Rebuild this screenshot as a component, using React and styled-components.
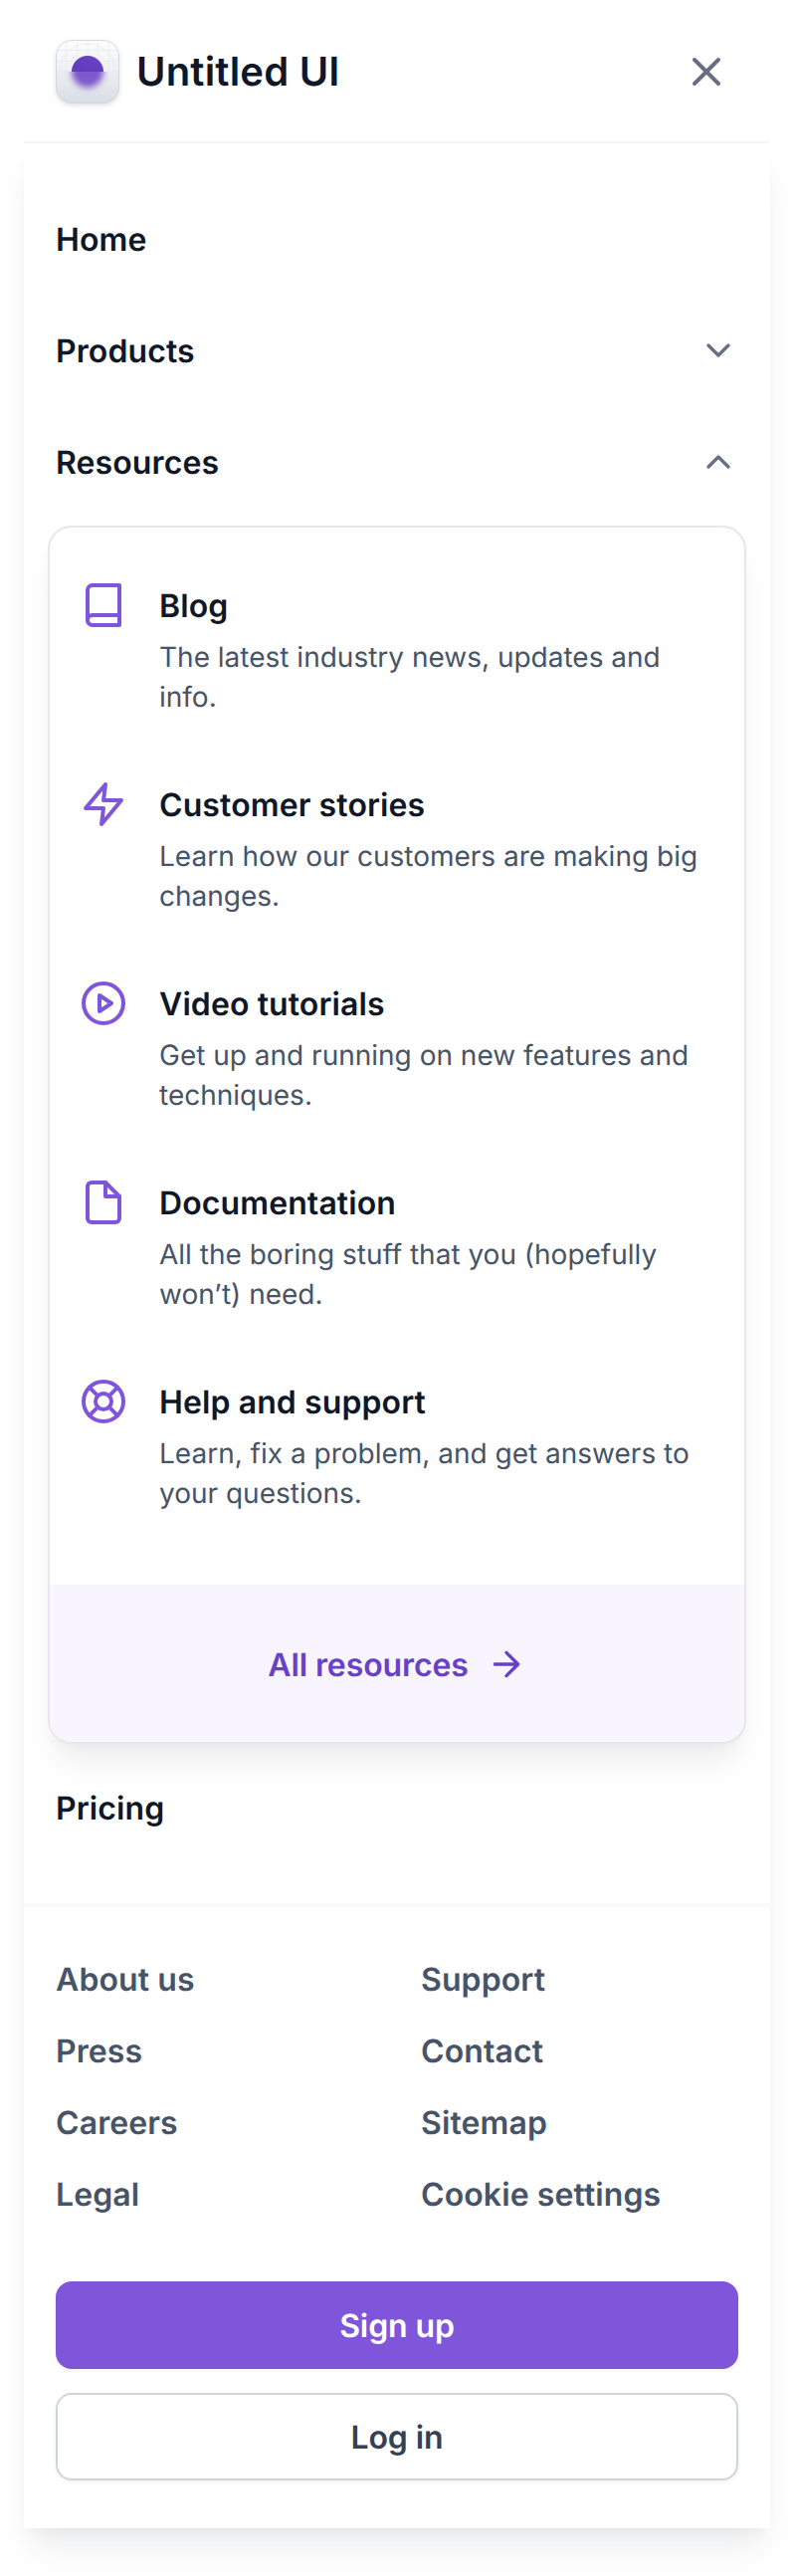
import React from "react";
import styled, { createGlobalStyle } from "styled-components";

const Global = createGlobalStyle`
  * { box-sizing: border-box; }
  body {
    margin: 0;
    background: #fff;
    font-family: Inter, "Liberation Sans", sans-serif;
    text-rendering: geometricPrecision;
  }
  a { color: inherit; text-decoration: none; }
  button { font-family: inherit; text-rendering: inherit; cursor: pointer; }
`;

const Page = styled.div`
  padding: 0 24px 48px;
`;

const Header = styled.header`
  display: flex;
  align-items: center;
  justify-content: space-between;
  height: 144px;
  padding: 2px 40px 0 32px;
  border-bottom: 2px solid #f2f4f7;
`;

const Brand = styled.a`
  display: flex;
  align-items: center;
  gap: 17px;
`;

const LogoTile = styled.svg`
  display: block;
  width: 64px;
  height: 64px;
  overflow: visible;
`;

const BrandName = styled.span`
  font-size: 40px;
  font-weight: 600;
  line-height: 64px;
  letter-spacing: 0.2px;
  color: #101828;
`;

const CloseButton = styled.button`
  display: flex;
  padding: 0;
  border: 0;
  background: none;
  color: #667085;
`;

const Menu = styled.div`
  background: #fff;
  box-shadow: 0 24px 32px -8px rgba(16, 24, 40, 0.09), 0 8px 12px -4px rgba(16, 24, 40, 0.03);
`;

const Nav = styled.nav`
  padding: 40px 0;
`;

const NavRow = styled.a`
  display: flex;
  align-items: center;
  justify-content: space-between;
  height: 112px;
  padding: 0 32px;
  color: #101828;
  svg { color: #667085; }
`;

const Label = styled.span`
  display: block;
  height: 48px;
  padding-top: 1px;
  font-size: 32px;
  font-weight: 600;
  line-height: 48px;
  letter-spacing: ${(p) => (p.$tight ? "-0.1px" : "0.1px")};
`;

const Submenu = styled.section`
  margin: 8px 24px;
  border: 2px solid #e4e7ec;
  border-radius: 24px;
  overflow: hidden;
  background: #fff;
  box-shadow: 0 24px 32px -8px rgba(16, 24, 40, 0.08), 0 8px 12px -4px rgba(16, 24, 40, 0.03);
`;

const ResourceList = styled.div`
  display: flex;
  flex-direction: column;
  gap: 64px;
  padding: 54px 30px 72px;
`;

const Resource = styled.a`
  display: flex;
  align-items: flex-start;
  gap: 32px;
  color: #101828;
  > svg { color: #7f56d9; }
`;

const ResourceText = styled.div`
  flex: 1;
  display: flex;
  flex-direction: column;
  gap: 8px;
`;

const ResourceBlurb = styled.span`
  font-size: 28px;
  line-height: 40px;
  color: #475467;
`;

const AllResources = styled.a`
  display: flex;
  align-items: center;
  justify-content: center;
  gap: 18px;
  height: 158px;
  padding-top: 2px;
  background: #f9f5ff;
  color: #6941c6;
`;

const Footer = styled.footer`
  display: flex;
  flex-direction: column;
  gap: 64px;
  padding: 48px 32px;
  border-top: 4px solid #f9fafb;
`;

const LinkGrid = styled.div`
  display: grid;
  grid-template-columns: 1fr 1fr;
  gap: 24px 48px;
`;

const FooterLink = styled.a`
  color: #475467;
`;

const Actions = styled.div`
  display: flex;
  flex-direction: column;
  gap: 24px;
`;

const Button = styled.button`
  display: flex;
  align-items: center;
  justify-content: center;
  height: 88px;
  padding: 0;
  border: 2px solid ${(p) => (p.$primary ? "#7f56d9" : "#d0d5dd")};
  border-radius: 16px;
  background: ${(p) => (p.$primary ? "#7f56d9" : "#fff")};
  color: ${(p) => (p.$primary ? "#fff" : "#344054")};
  box-shadow: 0 2px 4px rgba(16, 24, 40, 0.05);
`;

const IconSvg = styled.svg`
  display: block;
  flex: none;
  fill: none;
  stroke: currentColor;
  stroke-width: 2;
  stroke-linecap: round;
  stroke-linejoin: round;
`;

const shapes = {
  close: <path d="M18 6 6 18M6 6l12 12" />,
  down: <path d="m6 9 6 6 6-6" />,
  up: <path d="m18 15-6-6-6 6" />,
  arrow: <path d="M5 12h14M12 5l7 7-7 7" />,
  book: (
    <>
      <path d="M4 19.5A2.5 2.5 0 0 1 6.5 17H20" />
      <path d="M6.5 2H20v20H6.5A2.5 2.5 0 0 1 4 19.5v-15A2.5 2.5 0 0 1 6.5 2z" />
    </>
  ),
  zap: <path d="M13 2 3 14h9l-1 8 10-12h-9l1-8z" />,
  play: (
    <>
      <circle cx="12" cy="12" r="10" />
      <path d="m10 8 6 4-6 4V8z" />
    </>
  ),
  file: (
    <>
      <path d="M13 2H6a2 2 0 0 0-2 2v16a2 2 0 0 0 2 2h12a2 2 0 0 0 2-2V9z" />
      <path d="M13 2v7h7" />
    </>
  ),
  buoy: (
    <>
      <circle cx="12" cy="12" r="10" />
      <circle cx="12" cy="12" r="4" />
      <path d="m4.93 4.93 4.24 4.24M14.83 14.83l4.24 4.24M14.83 9.17l4.24-4.24M4.93 19.07l4.24-4.24" />
    </>
  ),
};

const Icon = ({ name, size = 48 }) => (
  <IconSvg viewBox="0 0 24 24" width={size} height={size} aria-hidden="true">
    {shapes[name]}
  </IconSvg>
);

const Logo = () => (
  <LogoTile viewBox="0 0 64 64" aria-hidden="true">
    <defs>
      <linearGradient id="tile" x1="0" y1="0" x2="0" y2="1">
        <stop offset="0" stopColor="#fff" />
        <stop offset="1" stopColor="#d9dde4" />
      </linearGradient>
      <linearGradient id="ball" x1="0.7" y1="0" x2="0.3" y2="1">
        <stop offset="0" stopColor="#6941c6" />
        <stop offset="1" stopColor="#5b38b0" />
      </linearGradient>
      <filter id="soft" x="-50%" y="-50%" width="200%" height="200%">
        <feGaussianBlur stdDeviation="3.2" />
      </filter>
      <filter id="drop" x="-20%" y="-20%" width="140%" height="150%">
        <feDropShadow dx="0" dy="2" stdDeviation="2" floodColor="#101828" floodOpacity="0.12" />
      </filter>
      <clipPath id="upper"><rect width="64" height="32" /></clipPath>
      <clipPath id="lower"><rect y="32" width="64" height="32" /></clipPath>
      <clipPath id="tileShape"><rect width="64" height="64" rx="16" /></clipPath>
    </defs>
    <rect width="64" height="64" rx="16" fill="url(#tile)" filter="url(#drop)" />
    <g clipPath="url(#tileShape)" fill="none" stroke="#e6e8ef" strokeWidth="0.7">
      <g clipPath="url(#upper)">
        <path d="M10.5 0v32M21.5 0v32M32 0v32M42.5 0v32M53.5 0v32M0 10.5h64M0 21.5h64" />
        <circle cx="32" cy="32" r="28" />
      </g>
      <path d="M0 32h64" />
    </g>
    <rect x="0.5" y="0.5" width="63" height="63" rx="15.5" fill="none" stroke="#d0d5dd" strokeOpacity="0.9" />
    <g clipPath="url(#upper)">
      <circle cx="32" cy="32" r="16" fill="url(#ball)" />
    </g>
    <g clipPath="url(#lower)">
      <circle cx="32" cy="32" r="16" fill="#6941c6" fillOpacity="0.85" filter="url(#soft)" />
    </g>
  </LogoTile>
);

const resources = [
  ["book", "Blog", "The latest industry news, updates and info."],
  ["zap", "Customer stories", "Learn how our customers are making big changes."],
  ["play", "Video tutorials", "Get up and running on new features and techniques."],
  ["file", "Documentation", "All the boring stuff that you (hopefully won’t) need."],
  ["buoy", "Help and support", "Learn, fix a problem, and get answers to your questions."],
];

const footerLinks = [
  "About us", "Support",
  "Press", "Contact",
  "Careers", "Sitemap",
  "Legal", "Cookie settings",
];

export default function App() {
  return (
    <>
      <Global />
      <Page>
        <Header>
          <Brand href="#">
            <Logo />
            <BrandName>Untitled UI</BrandName>
          </Brand>
          <CloseButton aria-label="Close menu"><Icon name="close" /></CloseButton>
        </Header>
        <Menu>
          <Nav>
            <NavRow href="#"><Label>Home</Label></NavRow>
            <NavRow href="#"><Label>Products</Label><Icon name="down" size={40} /></NavRow>
            <NavRow href="#"><Label>Resources</Label><Icon name="up" size={40} /></NavRow>
            <Submenu>
              <ResourceList>
                {resources.map(([icon, title, blurb]) => (
                  <Resource href="#" key={title}>
                    <Icon name={icon} />
                    <ResourceText>
                      <Label>{title}</Label>
                      <ResourceBlurb>{blurb}</ResourceBlurb>
                    </ResourceText>
                  </Resource>
                ))}
              </ResourceList>
              <AllResources href="#"><Label $tight>All resources</Label><Icon name="arrow" size={40} /></AllResources>
            </Submenu>
            <NavRow href="#"><Label>Pricing</Label></NavRow>
          </Nav>
          <Footer>
            <LinkGrid>
              {footerLinks.map((label) => (
                <FooterLink href="#" key={label}><Label>{label}</Label></FooterLink>
              ))}
            </LinkGrid>
            <Actions>
              <Button $primary><Label $tight>Sign up</Label></Button>
              <Button><Label $tight>Log in</Label></Button>
            </Actions>
          </Footer>
        </Menu>
      </Page>
    </>
  );
}
